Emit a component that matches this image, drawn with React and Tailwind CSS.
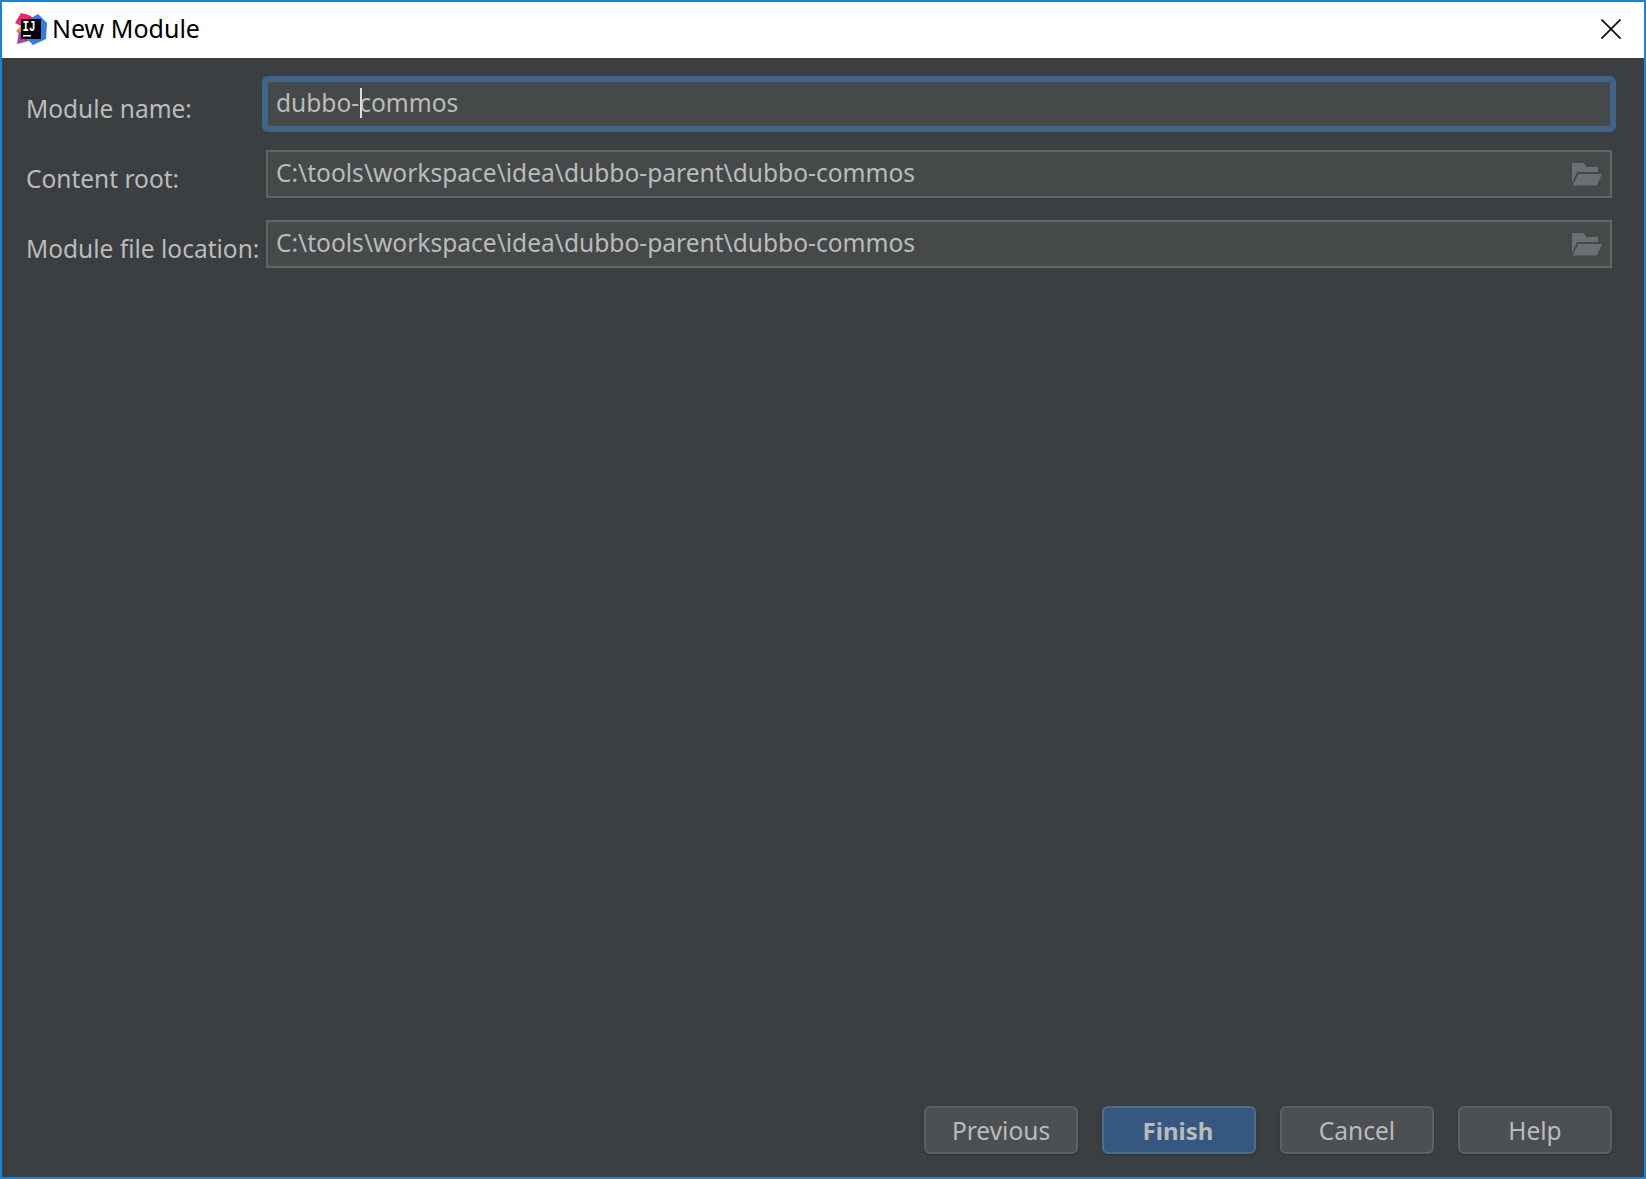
const LogoIcon = () => (
  <svg width="32" height="32" viewBox="0 0 32 32" className="shrink-0">
    <path d="M0 10 L6 0 L14 2 L20 6 L8 14 Z" fill="#f0246f" />
    <path d="M18 4 L23 1 L32 10 L31 26 L18 32 L12 26 Z" fill="#2f7be8" />
    <path d="M1 18 L6 13 L6 22 Z" fill="#f08a24" />
    <path d="M2 31 L4 18 L14 28 Z" fill="#a8449c" />
    <rect x="6" y="6" width="20" height="20" fill="#000" />
    <text x="7.5" y="17.5" fill="#fff" fontSize="14" fontWeight="700" textLength="13" lengthAdjust="spacingAndGlyphs" fontFamily="'Liberation Mono', monospace">IJ</text>
    <rect x="8" y="22" width="8" height="1.5" fill="#fff" />
  </svg>
);

const FolderIcon = () => (
  <svg width="30" height="23" viewBox="0 0 30 23" className="shrink-0">
    <path d="M0 0 H12 L14 4 H26 V9 H5 L0 20 Z" fill="#6b7172" />
    <path d="M6.5 11 H30 L25 22.5 H0.5 Z" fill="#6b7172" />
  </svg>
);

const Field = ({ label, value, focused, icon }) => (
  <div className="flex items-center">
    <div className="w-[240px] shrink-0 pt-[9px] text-[24.5px] leading-[38px] text-[#bbbbbb]">{label}</div>
    <div
      className={`flex flex-1 items-center h-[48px] pl-[8px] pr-[8px] bg-[#45494a] border-2 ${
        focused
          ? 'border-[#41658a] rounded-[2px] outline-[4px] outline-[#41658a]'
          : 'border-[#646464]'
      }`}
    >
      <div className="relative flex-1 -translate-y-[1px] text-[24.55px] leading-[38px] text-[#bbbbbb] whitespace-nowrap">
        {value}
        {focused && <span className="absolute left-[84px] top-[4px] w-[2px] h-[30px] bg-[#dddddd]" />}
      </div>
      {icon && <FolderIcon />}
    </div>
  </div>
);

const Btn = ({ children, primary }) => (
  <button
    className={`w-[154px] h-[48px] rounded-[6px] border-2 shadow-[0_1px_2px_rgba(0,0,0,0.25)] ${
      primary
        ? 'pt-[1px] pr-[2px] bg-[#365880] border-[#4c708c] text-[#bbbbbb] text-[24px] font-bold'
        : 'pt-[3px] bg-[#4c5052] border-[#5e6060] text-[#bbbbbb] text-[24.5px]'
    }`}
  >
    {children}
  </button>
);

export default function App() {
  return (
    <div className="flex flex-col h-screen border-2 border-[#1883d7] bg-[#3c3f41] font-['Noto_Sans','Open_Sans',sans-serif]">
      <div className="flex items-center justify-between h-[56px] shrink-0 bg-white pb-[2px] pl-[13px] pr-[23px]">
        <div className="flex items-center gap-[5px]">
          <LogoIcon />
          <span className="text-[25px] text-black">New Module</span>
        </div>
        <svg width="20" height="20" viewBox="0 0 20 20" stroke="#111" strokeWidth="1.8" fill="none">
          <path d="M0.5 0.5 L19.5 19.5 M19.5 0.5 L0.5 19.5" />
        </svg>
      </div>

      <div className="flex flex-1 flex-col justify-between pt-[22px] pb-[23px] pl-[24px] pr-[32px]">
        <div className="flex flex-col gap-[22px]">
          <Field label="Module name:" value="dubbo-commos" focused />
          <Field label="Content root:" value="C:\tools\workspace\idea\dubbo-parent\dubbo-commos" icon />
          <Field label="Module file location:" value="C:\tools\workspace\idea\dubbo-parent\dubbo-commos" icon />
        </div>
        <div className="flex justify-end gap-[24px]">
          <Btn>Previous</Btn>
          <Btn primary>Finish</Btn>
          <Btn>Cancel</Btn>
          <Btn>Help</Btn>
        </div>
      </div>
    </div>
  );
}
